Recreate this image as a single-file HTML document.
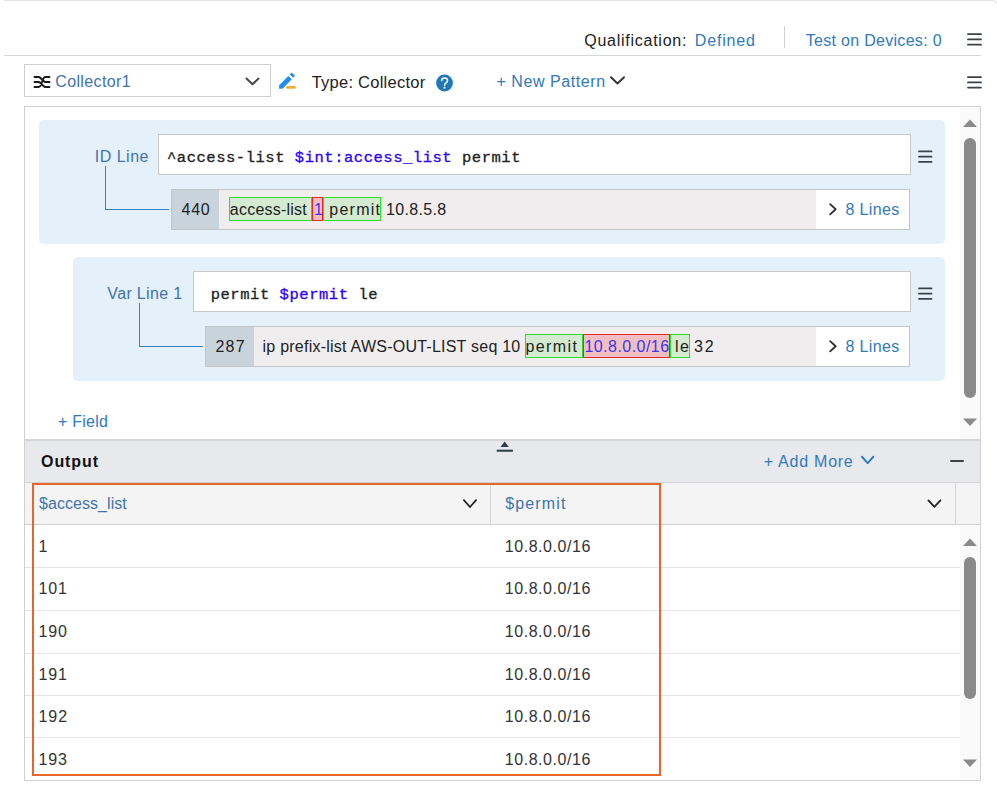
<!DOCTYPE html>
<html><head><meta charset="utf-8"><style>
html,body{margin:0;padding:0;background:#fff;width:997px;height:788px;overflow:hidden;position:relative;}
.t{position:absolute;white-space:nowrap;line-height:1;}
.b{position:absolute;}
</style></head><body>
<div class="t" style="left:584.28px;top:33.00px;font-size:16px;color:#222;font-weight:normal;font-family:'Liberation Sans', sans-serif;letter-spacing:0.738px;">Qualification:</div>
<div class="t" style="left:694.72px;top:33.00px;font-size:16px;color:#3279bd;font-weight:normal;font-family:'Liberation Sans', sans-serif;letter-spacing:0.853px;">Defined</div>
<div class="b" style="left:784px;top:26px;width:1px;height:22px;background:#d0d0d0;"></div>
<div class="t" style="left:805.68px;top:33.00px;font-size:16px;color:#3279bd;font-weight:normal;font-family:'Liberation Sans', sans-serif;letter-spacing:0.304px;">Test on Devices: 0</div>
<div class="b" style="left:4px;top:55px;width:977px;height:1px;background:#d5d8dc;"></div>
<div class="b" style="left:24px;top:64px;width:247px;height:33px;border:1px solid #cfcfcf;box-sizing:border-box;background:#fff;"></div>
<svg style="position:absolute;left:32px;top:74px" width="20" height="16" viewBox="0 0 20 16"><path d="M2.5 3 H6.5 Q7.5 3 8.5 4 L11.5 7 Q12.5 8 13.5 8 H17.5 M2.5 8 H6.5 Q7.5 8 8.5 9 L11.5 12 Q12.5 13 13.5 13 H17.5 M2.5 13 H6.5 Q7.5 13 8.3 12 L11.7 4 Q12.5 3 13.5 3 H17.5" fill="none" stroke="#1a1a1a" stroke-width="1.9" stroke-linecap="round" stroke-linejoin="round"/></svg>
<div class="t" style="left:55.20px;top:74.00px;font-size:16px;color:#3f74aa;font-weight:normal;font-family:'Liberation Sans', sans-serif;letter-spacing:0.391px;">Collector1</div>
<svg style="position:absolute;left:278px;top:71px" width="19" height="19" viewBox="0 0 19 19"><path d="M1.1 17.8 L1.1 14.3 L10.4 4.9 L13.8 8.3 L4.5 17.8 Z" fill="#1f8fef"/><path d="M11.8 3.4 L13.7 1.5 L17 4.8 L15.2 6.7 Z" fill="#1f8fef"/><rect x="7.9" y="15.1" width="9.9" height="2.65" rx="1.3" fill="#f4ad3d"/></svg>
<div class="t" style="left:311.67px;top:74.00px;font-size:16.5px;color:#222;font-weight:normal;font-family:'Liberation Sans', sans-serif;letter-spacing:0.252px;">Type: Collector</div>
<div class="t" style="left:496.40px;top:74.00px;font-size:16px;color:#3279bd;font-weight:normal;font-family:'Liberation Sans', sans-serif;letter-spacing:0.577px;">+ New Pattern</div>
<div class="b" style="left:24px;top:106px;width:957px;height:675px;border:1px solid #d0d0d0;box-sizing:border-box;background:#fff;"></div>
<div class="b" style="left:960px;top:107px;width:20px;height:333px;background:#fafafa;"></div>
<svg style="position:absolute;left:963px;top:119px" width="14" height="9"><path d="M0 8 L7 0.5 L14 8 Z" fill="#8a8a8a"/></svg>
<div class="b" style="left:964px;top:138px;width:12px;height:260px;background:#8a8a8a;border-radius:6px;"></div>
<svg style="position:absolute;left:963px;top:418px" width="14" height="9"><path d="M0 0.5 L7 8 L14 0.5 Z" fill="#8a8a8a"/></svg>
<div class="b" style="left:39px;top:120px;width:906px;height:124px;background:#e5f1fa;border-radius:5px;"></div>
<div class="t" style="left:94.76px;top:149.00px;font-size:16px;color:#3f74aa;font-weight:normal;font-family:'Liberation Sans', sans-serif;letter-spacing:0.507px;">ID Line</div>
<div class="b" style="left:158px;top:134px;width:753px;height:41px;border:1px solid #c9c9c9;box-sizing:border-box;background:#fff;"></div>
<div class="t" style="left:166.99px;top:151.00px;font-size:15.5px;color:#222;font-weight:normal;font-family:'Liberation Mono', monospace;letter-spacing:0.531px;-webkit-text-stroke:0.3px currentColor;">^access-list <span style="color:#2a00ff">$int:access_list</span> permit</div>
<div class="b" style="left:105px;top:166px;width:1px;height:44px;background:#3a7fc0;"></div>
<div class="b" style="left:105px;top:209px;width:64px;height:1px;background:#3a7fc0;"></div>
<div class="b" style="left:171px;top:189px;width:739px;height:41px;border:1px solid #c4c4c4;box-sizing:border-box;background:#efeded;"></div>
<div class="b" style="left:172px;top:190px;width:47px;height:39px;background:#c8d3dc;"></div>
<div class="t" style="left:181.58px;top:202.00px;font-size:16px;color:#222;font-weight:normal;font-family:'Liberation Sans', sans-serif;letter-spacing:0.670px;">440</div>
<div class="b" style="left:229px;top:197px;width:83px;height:24px;background:#d4ebd1;border:1px solid #28e028;box-sizing:border-box;"></div>
<div class="t" style="left:229.86px;top:202.00px;font-size:16px;color:#222;font-weight:normal;font-family:'Liberation Sans', sans-serif;letter-spacing:0.218px;">access-list</div>
<div class="b" style="left:312px;top:197px;width:11px;height:24px;background:#f1bfc2;border:1px solid #e5262a;box-sizing:border-box;"></div>
<div class="t" style="left:314.10px;top:202.00px;font-size:16px;color:#3a36ee;font-weight:normal;font-family:'Liberation Sans', sans-serif;letter-spacing:-1.760px;">1</div>
<div class="b" style="left:323px;top:197px;width:58px;height:24px;background:#d4ebd1;border:1px solid #28e028;box-sizing:border-box;"></div>
<div class="t" style="left:329.36px;top:202.00px;font-size:16px;color:#222;font-weight:normal;font-family:'Liberation Sans', sans-serif;letter-spacing:1.224px;">permit</div>
<div class="t" style="left:386.00px;top:202.00px;font-size:16px;color:#222;font-weight:normal;font-family:'Liberation Sans', sans-serif;letter-spacing:0.329px;">10.8.5.8</div>
<div class="b" style="left:816px;top:190px;width:93px;height:39px;background:#fff;"></div>
<div class="t" style="left:845.56px;top:202.00px;font-size:16px;color:#3279bd;font-weight:normal;font-family:'Liberation Sans', sans-serif;letter-spacing:0.333px;">8 Lines</div>
<div class="b" style="left:73px;top:257px;width:872px;height:124px;background:#e5f1fa;border-radius:5px;"></div>
<div class="t" style="left:107.32px;top:286.00px;font-size:16px;color:#3f74aa;font-weight:normal;font-family:'Liberation Sans', sans-serif;letter-spacing:0.349px;">Var Line 1</div>
<div class="b" style="left:193px;top:271px;width:718px;height:41px;border:1px solid #c9c9c9;box-sizing:border-box;background:#fff;"></div>
<div class="t" style="left:210.68px;top:288.00px;font-size:15.5px;color:#222;font-weight:normal;font-family:'Liberation Mono', monospace;letter-spacing:0.545px;-webkit-text-stroke:0.3px currentColor;">permit <span style="color:#2a00ff">$permit</span> le</div>
<div class="b" style="left:139px;top:303px;width:1px;height:44px;background:#3a7fc0;"></div>
<div class="b" style="left:139px;top:346px;width:64px;height:1px;background:#3a7fc0;"></div>
<div class="b" style="left:205px;top:326px;width:705px;height:41px;border:1px solid #c4c4c4;box-sizing:border-box;background:#efeded;"></div>
<div class="b" style="left:206px;top:327px;width:48px;height:39px;background:#c8d3dc;"></div>
<div class="t" style="left:215.50px;top:339.00px;font-size:16px;color:#222;font-weight:normal;font-family:'Liberation Sans', sans-serif;letter-spacing:1.180px;">287</div>
<div class="t" style="left:262.56px;top:339.00px;font-size:16px;color:#222;font-weight:normal;font-family:'Liberation Sans', sans-serif;letter-spacing:0.238px;">ip prefix-list AWS-OUT-LIST seq 10</div>
<div class="b" style="left:525px;top:334px;width:58px;height:24px;background:#d4ebd1;border:1px solid #28e028;box-sizing:border-box;"></div>
<div class="t" style="left:525.56px;top:339.00px;font-size:16px;color:#222;font-weight:normal;font-family:'Liberation Sans', sans-serif;letter-spacing:1.384px;">permit</div>
<div class="b" style="left:583px;top:334px;width:87px;height:24px;background:#f1bfc2;border:1px solid #e5262a;box-sizing:border-box;"></div>
<div class="t" style="left:584.40px;top:339.00px;font-size:16px;color:#3a36ee;font-weight:normal;font-family:'Liberation Sans', sans-serif;letter-spacing:0.466px;">10.8.0.0/16</div>
<div class="b" style="left:670px;top:334px;width:20px;height:24px;background:#d4ebd1;border:1px solid #28e028;box-sizing:border-box;"></div>
<div class="t" style="left:674.96px;top:339.00px;font-size:16px;color:#222;font-weight:normal;font-family:'Liberation Sans', sans-serif;letter-spacing:1.480px;">le</div>
<div class="t" style="left:694.04px;top:339.00px;font-size:16px;color:#222;font-weight:normal;font-family:'Liberation Sans', sans-serif;letter-spacing:1.900px;">32</div>
<div class="b" style="left:816px;top:327px;width:93px;height:39px;background:#fff;"></div>
<div class="t" style="left:845.56px;top:339.00px;font-size:16px;color:#3279bd;font-weight:normal;font-family:'Liberation Sans', sans-serif;letter-spacing:0.333px;">8 Lines</div>
<div class="t" style="left:58.00px;top:414.00px;font-size:16px;color:#3279bd;font-weight:normal;font-family:'Liberation Sans', sans-serif;letter-spacing:0.247px;">+ Field</div>
<div class="b" style="left:25px;top:439px;width:955px;height:2px;background:#d6d6d6;"></div>
<div class="b" style="left:25px;top:441px;width:955px;height:41px;background:#e8e9ec;"></div>
<svg style="position:absolute;left:496px;top:441px" width="17" height="11"><path d="M4.5 6 L8.7 0.6 L12.9 6 Z" fill="#2f3b44"/><rect x="0.7" y="8.7" width="16.2" height="2" fill="#2f3b44"/></svg>
<div class="t" style="left:41.06px;top:454.00px;font-size:16px;color:#111;font-weight:bold;font-family:'Liberation Sans', sans-serif;letter-spacing:0.920px;">Output</div>
<div class="t" style="left:763.70px;top:454.00px;font-size:16px;color:#3279bd;font-weight:normal;font-family:'Liberation Sans', sans-serif;letter-spacing:0.756px;">+ Add More</div>
<div class="b" style="left:949.5px;top:460px;width:14.5px;height:2px;background:#404040;border-radius:1px;"></div>
<div class="b" style="left:25px;top:482px;width:955px;height:42px;background:#f4f4f4;"></div>
<div class="b" style="left:25px;top:482px;width:955px;height:1px;background:#d3d3d3;"></div>
<div class="b" style="left:25px;top:524px;width:955px;height:1px;background:#cfcfcf;"></div>
<div class="b" style="left:490px;top:482px;width:1px;height:42px;background:#d6d6d6;"></div>
<div class="b" style="left:955px;top:482px;width:1px;height:42px;background:#d6d6d6;"></div>
<div class="t" style="left:39.04px;top:496.00px;font-size:16px;color:#3f74aa;font-weight:normal;font-family:'Liberation Sans', sans-serif;letter-spacing:0.056px;">$access_list</div>
<div class="t" style="left:505.34px;top:496.00px;font-size:16px;color:#3f74aa;font-weight:normal;font-family:'Liberation Sans', sans-serif;letter-spacing:1.110px;">$permit</div>
<div class="t" style="left:38.50px;top:539.00px;font-size:16px;color:#333;font-weight:normal;font-family:'Liberation Sans', sans-serif;letter-spacing:-1.260px;">1</div>
<div class="t" style="left:504.80px;top:539.00px;font-size:16px;color:#333;font-weight:normal;font-family:'Liberation Sans', sans-serif;letter-spacing:0.546px;">10.8.0.0/16</div>
<div class="t" style="left:38.50px;top:581.00px;font-size:16px;color:#333;font-weight:normal;font-family:'Liberation Sans', sans-serif;letter-spacing:0.890px;">101</div>
<div class="t" style="left:504.80px;top:581.00px;font-size:16px;color:#333;font-weight:normal;font-family:'Liberation Sans', sans-serif;letter-spacing:0.546px;">10.8.0.0/16</div>
<div class="t" style="left:38.50px;top:624.00px;font-size:16px;color:#333;font-weight:normal;font-family:'Liberation Sans', sans-serif;letter-spacing:0.810px;">190</div>
<div class="t" style="left:504.80px;top:624.00px;font-size:16px;color:#333;font-weight:normal;font-family:'Liberation Sans', sans-serif;letter-spacing:0.546px;">10.8.0.0/16</div>
<div class="t" style="left:38.50px;top:667.00px;font-size:16px;color:#333;font-weight:normal;font-family:'Liberation Sans', sans-serif;letter-spacing:0.890px;">191</div>
<div class="t" style="left:504.80px;top:667.00px;font-size:16px;color:#333;font-weight:normal;font-family:'Liberation Sans', sans-serif;letter-spacing:0.546px;">10.8.0.0/16</div>
<div class="t" style="left:38.50px;top:709.00px;font-size:16px;color:#333;font-weight:normal;font-family:'Liberation Sans', sans-serif;letter-spacing:0.930px;">192</div>
<div class="t" style="left:504.80px;top:709.00px;font-size:16px;color:#333;font-weight:normal;font-family:'Liberation Sans', sans-serif;letter-spacing:0.546px;">10.8.0.0/16</div>
<div class="t" style="left:38.50px;top:752.00px;font-size:16px;color:#333;font-weight:normal;font-family:'Liberation Sans', sans-serif;letter-spacing:0.850px;">193</div>
<div class="t" style="left:504.80px;top:752.00px;font-size:16px;color:#333;font-weight:normal;font-family:'Liberation Sans', sans-serif;letter-spacing:0.546px;">10.8.0.0/16</div>
<div class="b" style="left:25px;top:567px;width:935px;height:1px;background:#e6e6e6;"></div>
<div class="b" style="left:25px;top:610px;width:935px;height:1px;background:#e6e6e6;"></div>
<div class="b" style="left:25px;top:653px;width:935px;height:1px;background:#e6e6e6;"></div>
<div class="b" style="left:25px;top:695px;width:935px;height:1px;background:#e6e6e6;"></div>
<div class="b" style="left:25px;top:737px;width:935px;height:1px;background:#e6e6e6;"></div>
<div class="b" style="left:960px;top:525px;width:20px;height:255px;background:#fafafa;"></div>
<svg style="position:absolute;left:963px;top:538px" width="14" height="9"><path d="M0 8 L7 0.5 L14 8 Z" fill="#8a8a8a"/></svg>
<div class="b" style="left:964px;top:557px;width:12px;height:142px;background:#8a8a8a;border-radius:6px;"></div>
<svg style="position:absolute;left:963px;top:759px" width="14" height="9"><path d="M0 0.5 L7 8 L14 0.5 Z" fill="#8a8a8a"/></svg>
<div class="b" style="left:32px;top:483px;width:629px;height:293px;border:2px solid #e7672a;box-sizing:border-box;"></div>
<svg style="position:absolute;left:0;top:0" width="997" height="788"><path d="M4 0.5 H992 Q997.5 0.5 997.5 6" fill="none" stroke="#e2e4e8" stroke-width="1.2"/><path d="M968 34.20 H981" stroke="#3c4249" stroke-width="1.8" stroke-linecap="round"/><path d="M968 39.45 H981" stroke="#3c4249" stroke-width="1.8" stroke-linecap="round"/><path d="M968 44.70 H981" stroke="#3c4249" stroke-width="1.8" stroke-linecap="round"/><path d="M246.45 78.45 L252.50 84.25 L258.55 78.45" fill="none" stroke="#444" stroke-width="1.9" stroke-linecap="round" stroke-linejoin="round"/><circle cx="444.5" cy="83" r="8.4" fill="#1f79b9"/><path d="M441.6 80.6 Q441.7 78 444.6 78 Q447.5 78 447.5 80.5 Q447.5 82.2 445.7 83.2 Q444.6 83.9 444.6 85.6" fill="none" stroke="#fff" stroke-width="1.5" stroke-linecap="round"/><circle cx="444.5" cy="87.7" r="1" fill="#fff"/><path d="M610.95 77.25 L617.50 83.55 L624.05 77.25" fill="none" stroke="#333" stroke-width="1.9" stroke-linecap="round" stroke-linejoin="round"/><path d="M968 77.20 H981" stroke="#3c4249" stroke-width="1.8" stroke-linecap="round"/><path d="M968 82.40 H981" stroke="#3c4249" stroke-width="1.8" stroke-linecap="round"/><path d="M968 87.60 H981" stroke="#3c4249" stroke-width="1.8" stroke-linecap="round"/><path d="M919 151.40 H931.5" stroke="#3c4249" stroke-width="1.8" stroke-linecap="round"/><path d="M919 156.65 H931.5" stroke="#3c4249" stroke-width="1.8" stroke-linecap="round"/><path d="M919 161.90 H931.5" stroke="#3c4249" stroke-width="1.8" stroke-linecap="round"/><path d="M830.15 204.15 L835.65 209.25 L830.15 214.35" fill="none" stroke="#333" stroke-width="1.9" stroke-linecap="round" stroke-linejoin="round"/><path d="M919 288.40 H931.5" stroke="#3c4249" stroke-width="1.8" stroke-linecap="round"/><path d="M919 293.65 H931.5" stroke="#3c4249" stroke-width="1.8" stroke-linecap="round"/><path d="M919 298.90 H931.5" stroke="#3c4249" stroke-width="1.8" stroke-linecap="round"/><path d="M830.15 341.15 L835.65 346.25 L830.15 351.35" fill="none" stroke="#333" stroke-width="1.9" stroke-linecap="round" stroke-linejoin="round"/><path d="M861.95 456.75 L867.65 463.05 L873.35 456.75" fill="none" stroke="#2a7ac8" stroke-width="1.9" stroke-linecap="round" stroke-linejoin="round"/><path d="M463.90 500.20 L470.00 507.00 L476.10 500.20" fill="none" stroke="#222" stroke-width="1.8" stroke-linecap="round" stroke-linejoin="round"/><path d="M928.40 500.40 L934.40 506.90 L940.40 500.40" fill="none" stroke="#222" stroke-width="1.8" stroke-linecap="round" stroke-linejoin="round"/></svg>
</body></html>
